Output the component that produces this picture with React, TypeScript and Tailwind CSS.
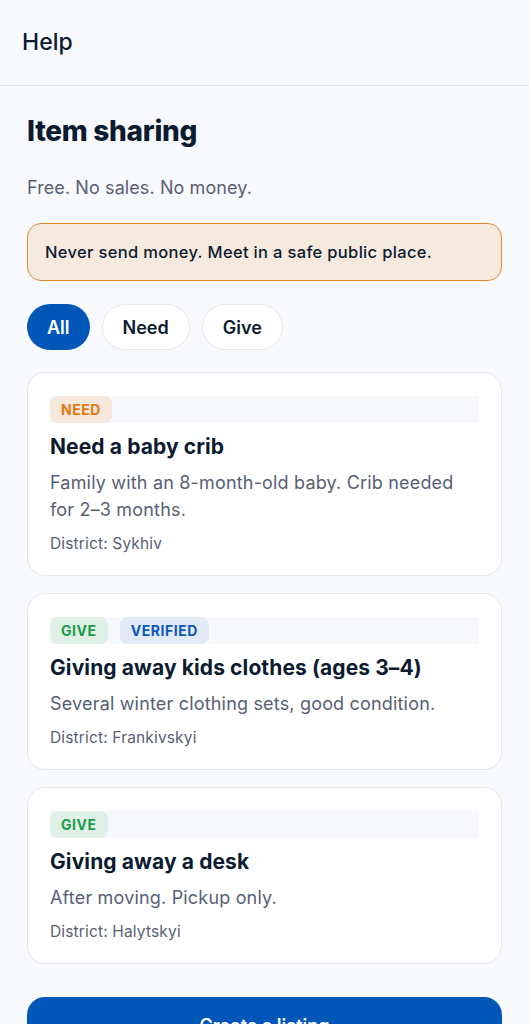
import React from 'react';

type Badge = { label: string; tone: 'need' | 'give' | 'verified' };

type Listing = {
  id: number;
  badges: Badge[];
  title: string;
  description: string;
  district: string;
};

const listings: Listing[] = [
  {
    id: 1,
    badges: [{ label: 'NEED', tone: 'need' }],
    title: 'Need a baby crib',
    description: 'Family with an 8-month-old baby. Crib needed for 2–3 months.',
    district: 'Sykhiv',
  },
  {
    id: 2,
    badges: [
      { label: 'GIVE', tone: 'give' },
      { label: 'VERIFIED', tone: 'verified' },
    ],
    title: 'Giving away kids clothes (ages 3–4)',
    description: 'Several winter clothing sets, good condition.',
    district: 'Frankivskyi',
  },
  {
    id: 3,
    badges: [{ label: 'GIVE', tone: 'give' }],
    title: 'Giving away a desk',
    description: 'After moving. Pickup only.',
    district: 'Halytskyi',
  },
];

const toneClass: Record<Badge['tone'], string> = {
  need: 'bg-[#f6e8dc] text-[#e07a10]',
  give: 'bg-[#dff0e6] text-[#1a9c4a]',
  verified: 'bg-[#e3eaf7] text-[#0c57b6]',
};

const filters = ['All', 'Need', 'Give'];

const ListingCard = ({ item }: { item: Listing }) => (
  <div className="flex flex-col rounded-[18px] border border-[#e3e6ec] bg-white px-[22px] pt-[23px] pb-[21px]">
    <div className="flex h-[27px] gap-3 bg-[#f7f8fb]">
      {item.badges.map((b) => (
        <span
          key={b.label}
          className={`flex h-[27px] items-center rounded-lg px-[11px] text-[14px] font-bold tracking-[0.04em] ${toneClass[b.tone]}`}
        >
          {b.label}
        </span>
      ))}
    </div>
    <h2 className="mt-[10px] text-[21px] leading-[28px] font-bold tracking-[0.005em] text-[#0d1b30]">
      {item.title}
    </h2>
    <p className="mt-2 text-[18px] leading-[27px] tracking-[0.01em] text-[#586074]">{item.description}</p>
    <p className="mt-[11px] text-[15.5px] leading-[20px] tracking-[0.01em] text-[#586074]">
      District: {item.district}
    </p>
  </div>
);

export default function App() {
  return (
    <div className="min-h-screen bg-[#f8f9fc] font-['Inter',sans-serif] text-[#0d1b30]">
      <header className="flex h-[86px] items-center border-b border-[#e4e6ec] px-[22px]">
        <span className="text-[23px] font-medium">Help</span>
      </header>

      <main className="flex flex-col px-[27px] pt-[27px]">
        <h1 className="text-[28px] leading-[36px] font-extrabold tracking-[-0.01em]">Item sharing</h1>
        <p className="mt-[26px] text-[18px] leading-[26px] tracking-[0.005em] text-[#586074]">
          Free. No sales. No money.
        </p>

        <div className="mt-[22px] flex h-[58px] items-center rounded-[14px] border border-[#e08a2a] bg-[#f6e9dd] px-[17px]">
          <span className="text-[16.5px] font-medium tracking-[0.02em]">
            Never send money. Meet in a safe public place.
          </span>
        </div>

        <div className="mt-[23px] flex gap-3">
          {filters.map((f, i) => (
            <button
              key={f}
              className={`flex h-[46px] items-center rounded-full px-5 text-[18px] font-semibold ${
                i === 0 ? 'bg-[#0057b8] text-white' : 'border border-[#e5e7eb] bg-white text-[#0d1b30]'
              }`}
            >
              {f}
            </button>
          ))}
        </div>

        <div className="mt-[22px] flex flex-col gap-[17px]">
          {listings.map((item) => (
            <ListingCard key={item.id} item={item} />
          ))}
        </div>

        <button className="mt-[33px] mb-6 flex h-[56px] items-center justify-center rounded-[18px] bg-[#0057b8] text-[18px] font-semibold text-white">
          Create a listing
        </button>
      </main>
    </div>
  );
}
